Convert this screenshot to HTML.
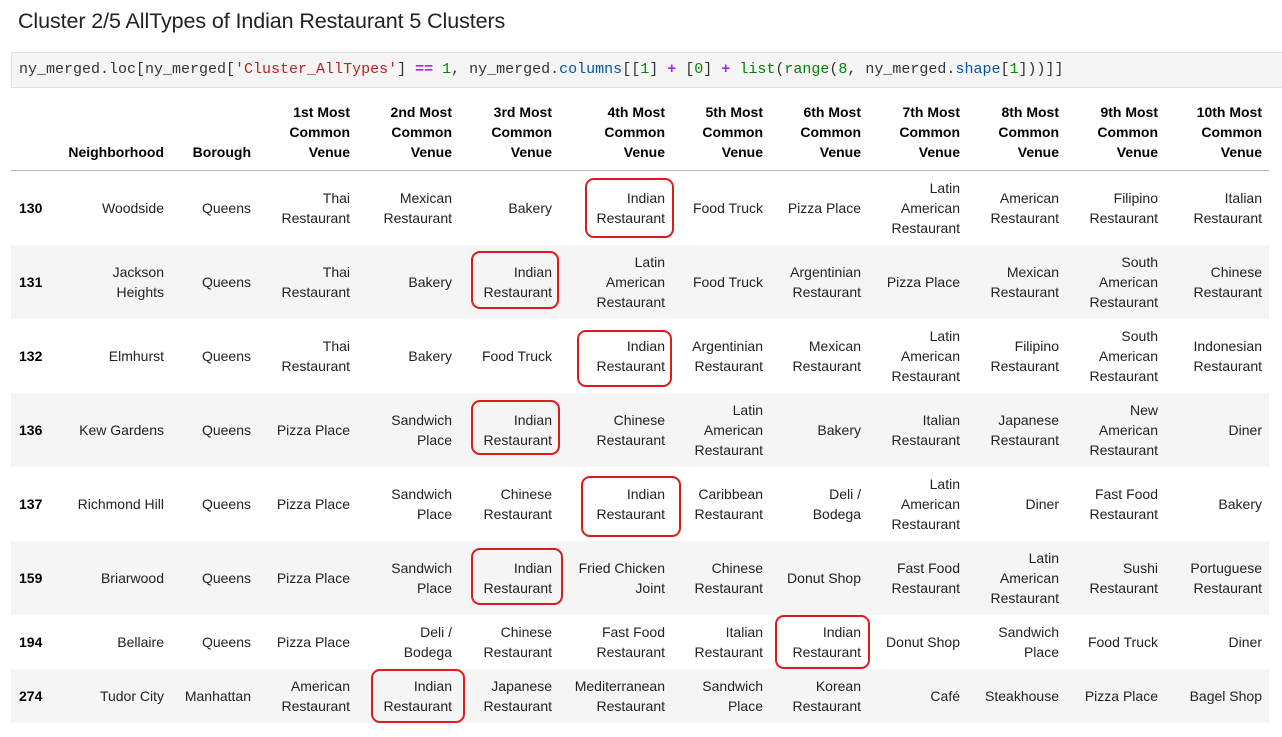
<!DOCTYPE html>
<html><head><meta charset="utf-8"><style>
body{margin:0;width:1282px;height:737px;background:#fff;position:relative;overflow:hidden;font-family:"Liberation Sans",sans-serif;color:#000}
h1{position:absolute;left:18px;top:9px;margin:0;font-size:21.5px;font-weight:normal;color:#222;letter-spacing:-0.1px}
.code{position:absolute;left:11px;top:52px;width:1271px;height:36px;background:#f5f5f5;border:1px solid #e0e0e0;border-right:none;box-sizing:border-box;font-family:"Liberation Mono",monospace;font-size:15px;line-height:34px;padding-left:7px;color:#333;white-space:pre}
.s{color:#ba2121}.o{color:#aa22ff;font-weight:bold}.n{color:#080}.b{color:#008000}.a{color:#0055aa}
table{position:absolute;left:11px;top:96px;border-collapse:collapse;table-layout:fixed;font-size:14px;line-height:20px}
td,th{text-align:right;padding:0 7px 0 0;vertical-align:middle;color:#222}
th{font-weight:bold;height:74px;vertical-align:bottom;padding-bottom:8px;color:#000;box-sizing:border-box}
thead tr{border-bottom:1px solid #bbb}
tbody tr:nth-child(even){background:#f5f5f5}
td.i{text-align:left;padding-left:8px;font-weight:bold;color:#000}
tr.h3 td{height:74px}tr.h2 td{height:54px}
.r{position:absolute;border:2px solid #e0191f;border-radius:9px;box-sizing:border-box}
</style></head><body>
<h1>Cluster 2/5 AllTypes of Indian Restaurant 5 Clusters</h1>
<div class="code">ny_merged.loc[ny_merged[<span class="s">'Cluster_AllTypes'</span>] <span class="o">==</span> <span class="n">1</span>, ny_merged.<span class="a">columns</span>[[<span class="n">1</span>] <span class="o">+</span> [<span class="n">0</span>] <span class="o">+</span> <span class="b">list</span>(<span class="b">range</span>(<span class="n">8</span>, ny_merged.<span class="a">shape</span>[<span class="n">1</span>]))]]</div>
<table>
<colgroup><col style="width:41px"><col style="width:119px"><col style="width:87px"><col style="width:99px"><col style="width:102px"><col style="width:100px"><col style="width:113px"><col style="width:98px"><col style="width:98px"><col style="width:99px"><col style="width:99px"><col style="width:99px"><col style="width:104px"></colgroup>
<thead><tr><th></th><th>Neighborhood</th><th>Borough</th><th>1st Most<br>Common<br>Venue</th><th>2nd Most<br>Common<br>Venue</th><th>3rd Most<br>Common<br>Venue</th><th>4th Most<br>Common<br>Venue</th><th>5th Most<br>Common<br>Venue</th><th>6th Most<br>Common<br>Venue</th><th>7th Most<br>Common<br>Venue</th><th>8th Most<br>Common<br>Venue</th><th>9th Most<br>Common<br>Venue</th><th>10th Most<br>Common<br>Venue</th></tr></thead>
<tbody>
<tr class="h3"><td class="i">130</td><td>Woodside</td><td>Queens</td><td>Thai<br>Restaurant</td><td>Mexican<br>Restaurant</td><td>Bakery</td><td>Indian<br>Restaurant</td><td>Food Truck</td><td>Pizza Place</td><td>Latin<br>American<br>Restaurant</td><td>American<br>Restaurant</td><td>Filipino<br>Restaurant</td><td>Italian<br>Restaurant</td></tr>
<tr class="h3"><td class="i">131</td><td>Jackson<br>Heights</td><td>Queens</td><td>Thai<br>Restaurant</td><td>Bakery</td><td>Indian<br>Restaurant</td><td>Latin<br>American<br>Restaurant</td><td>Food Truck</td><td>Argentinian<br>Restaurant</td><td>Pizza Place</td><td>Mexican<br>Restaurant</td><td>South<br>American<br>Restaurant</td><td>Chinese<br>Restaurant</td></tr>
<tr class="h3"><td class="i">132</td><td>Elmhurst</td><td>Queens</td><td>Thai<br>Restaurant</td><td>Bakery</td><td>Food Truck</td><td>Indian<br>Restaurant</td><td>Argentinian<br>Restaurant</td><td>Mexican<br>Restaurant</td><td>Latin<br>American<br>Restaurant</td><td>Filipino<br>Restaurant</td><td>South<br>American<br>Restaurant</td><td>Indonesian<br>Restaurant</td></tr>
<tr class="h3"><td class="i">136</td><td>Kew Gardens</td><td>Queens</td><td>Pizza Place</td><td>Sandwich<br>Place</td><td>Indian<br>Restaurant</td><td>Chinese<br>Restaurant</td><td>Latin<br>American<br>Restaurant</td><td>Bakery</td><td>Italian<br>Restaurant</td><td>Japanese<br>Restaurant</td><td>New<br>American<br>Restaurant</td><td>Diner</td></tr>
<tr class="h3"><td class="i">137</td><td>Richmond Hill</td><td>Queens</td><td>Pizza Place</td><td>Sandwich<br>Place</td><td>Chinese<br>Restaurant</td><td>Indian<br>Restaurant</td><td>Caribbean<br>Restaurant</td><td>Deli /<br>Bodega</td><td>Latin<br>American<br>Restaurant</td><td>Diner</td><td>Fast Food<br>Restaurant</td><td>Bakery</td></tr>
<tr class="h3"><td class="i">159</td><td>Briarwood</td><td>Queens</td><td>Pizza Place</td><td>Sandwich<br>Place</td><td>Indian<br>Restaurant</td><td>Fried Chicken<br>Joint</td><td>Chinese<br>Restaurant</td><td>Donut Shop</td><td>Fast Food<br>Restaurant</td><td>Latin<br>American<br>Restaurant</td><td>Sushi<br>Restaurant</td><td>Portuguese<br>Restaurant</td></tr>
<tr class="h2"><td class="i">194</td><td>Bellaire</td><td>Queens</td><td>Pizza Place</td><td>Deli /<br>Bodega</td><td>Chinese<br>Restaurant</td><td>Fast Food<br>Restaurant</td><td>Italian<br>Restaurant</td><td>Indian<br>Restaurant</td><td>Donut Shop</td><td>Sandwich<br>Place</td><td>Food Truck</td><td>Diner</td></tr>
<tr class="h2"><td class="i">274</td><td>Tudor City</td><td>Manhattan</td><td>American<br>Restaurant</td><td>Indian<br>Restaurant</td><td>Japanese<br>Restaurant</td><td>Mediterranean<br>Restaurant</td><td>Sandwich<br>Place</td><td>Korean<br>Restaurant</td><td>Café</td><td>Steakhouse</td><td>Pizza Place</td><td>Bagel Shop</td></tr>
</tbody></table>
<div class="r" style="left:585px;top:178px;width:89px;height:60px"></div>
<div class="r" style="left:471px;top:251px;width:88px;height:58px"></div>
<div class="r" style="left:577px;top:330px;width:95px;height:57px"></div>
<div class="r" style="left:471px;top:400px;width:89px;height:55px"></div>
<div class="r" style="left:581px;top:476px;width:100px;height:61px"></div>
<div class="r" style="left:471px;top:548px;width:92px;height:57px"></div>
<div class="r" style="left:775px;top:615px;width:95px;height:54px"></div>
<div class="r" style="left:371px;top:669px;width:94px;height:54px"></div>
</body></html>
